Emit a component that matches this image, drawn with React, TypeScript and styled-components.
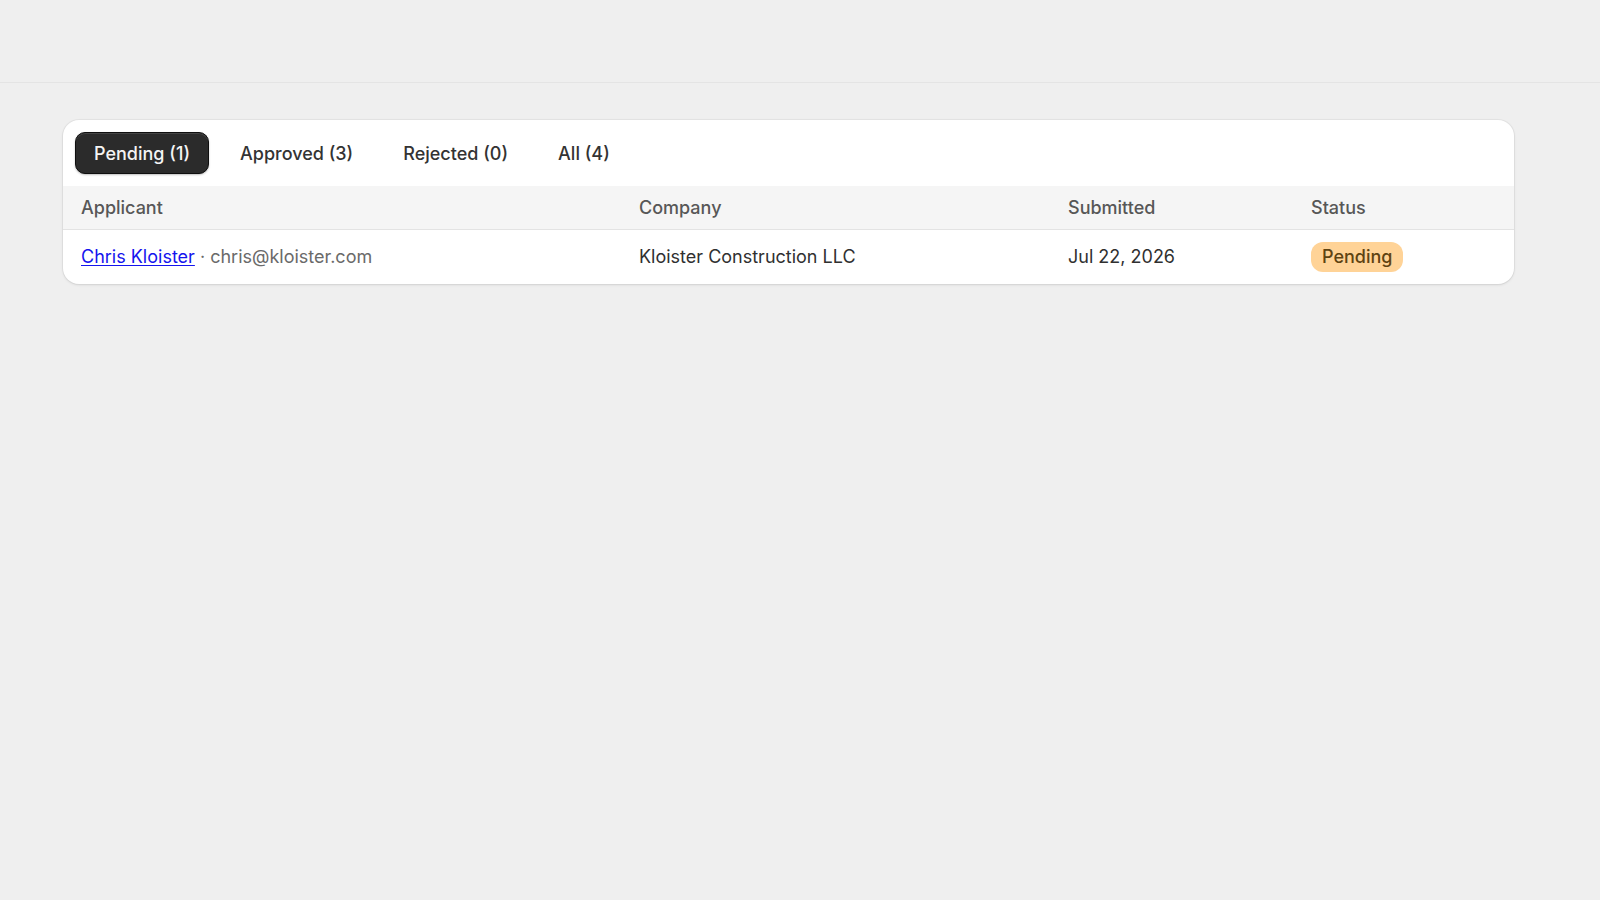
import React from "react";
import styled, { createGlobalStyle } from "styled-components";

const Global = createGlobalStyle`
  html, body { margin: 0; padding: 0; background: #efefef; }
  body { font-family: Inter, "Noto Sans", "Liberation Sans", sans-serif; color: #2a2a2a; }
  * { box-sizing: border-box; }
`;

const Page = styled.div`
  min-height: 900px;
  background: #efefef;
`;

const TopBar = styled.header`
  height: 83px;
  border-bottom: 1px solid #e4e4e4;
`;

const Main = styled.main`
  padding: 37px 86px 0 63px;
`;

const Card = styled.section`
  background: #fff;
  border-radius: 16px;
  box-shadow: 0 0 0 1px rgba(0, 0, 0, 0.04), 0 1px 3px rgba(0, 0, 0, 0.1);
  overflow: hidden;
`;

const Tabs = styled.nav`
  display: flex;
  align-items: center;
  gap: 12px;
  padding: 12px 12px;
`;

const Tab = styled.button<{ $active?: boolean }>`
  height: 42px;
  padding: 0 18px;
  border-radius: 10px;
  font-family: inherit;
  font-size: 18px;
  font-weight: 500;
  cursor: pointer;
  border: 1px solid ${(p) => (p.$active ? "#0f0f0f" : "transparent")};
  background: ${(p) => (p.$active ? "#2b2b2b" : "transparent")};
  color: ${(p) => (p.$active ? "#f4f4f4" : "#333")};
  box-shadow: ${(p) =>
    p.$active ? "inset 0 1px 0 rgba(255,255,255,0.12), 0 1px 2px rgba(0,0,0,0.25)" : "none"};
`;

const Table = styled.table`
  width: 100%;
  border-collapse: collapse;
  table-layout: fixed;
  font-size: 18px;
`;

const HeadRow = styled.tr`
  height: 43px;
  background: #f5f5f5;
  border-bottom: 1px solid #e3e3e3;
`;

const Th = styled.th`
  padding: 0 18px;
  text-align: left;
  font-weight: 500;
  color: #575757;
`;

const Row = styled.tr`
  height: 55px;
`;

const Td = styled.td`
  padding: 0 18px;
  color: #303030;
  white-space: nowrap;
`;

const NameLink = styled.a`
  color: #1414ee;
  text-decoration: underline;
  text-underline-offset: 2px;
`;

const Email = styled.span`
  color: #6a6a6a;
`;

const Badge = styled.span`
  display: inline-flex;
  align-items: center;
  height: 30px;
  padding: 0 11px;
  border-radius: 12px;
  background: #ffd397;
  color: #5e4312;
  font-weight: 500;
`;

export default function App() {
  return (
    <Page>
      <Global />
      <TopBar />
      <Main>
        <Card>
          <Tabs>
            <Tab $active>Pending (1)</Tab>
            <Tab>Approved (3)</Tab>
            <Tab>Rejected (0)</Tab>
            <Tab>All (4)</Tab>
          </Tabs>
          <Table>
            <colgroup>
              <col style={{ width: 558 }} />
              <col style={{ width: 429 }} />
              <col style={{ width: 243 }} />
              <col />
            </colgroup>
            <thead>
              <HeadRow>
                <Th>Applicant</Th>
                <Th>Company</Th>
                <Th>Submitted</Th>
                <Th>Status</Th>
              </HeadRow>
            </thead>
            <tbody>
              <Row>
                <Td>
                  <NameLink href="#">Chris Kloister</NameLink>
                  <Email> · chris@kloister.com</Email>
                </Td>
                <Td>Kloister Construction LLC</Td>
                <Td>Jul 22, 2026</Td>
                <Td>
                  <Badge>Pending</Badge>
                </Td>
              </Row>
            </tbody>
          </Table>
        </Card>
      </Main>
    </Page>
  );
}
